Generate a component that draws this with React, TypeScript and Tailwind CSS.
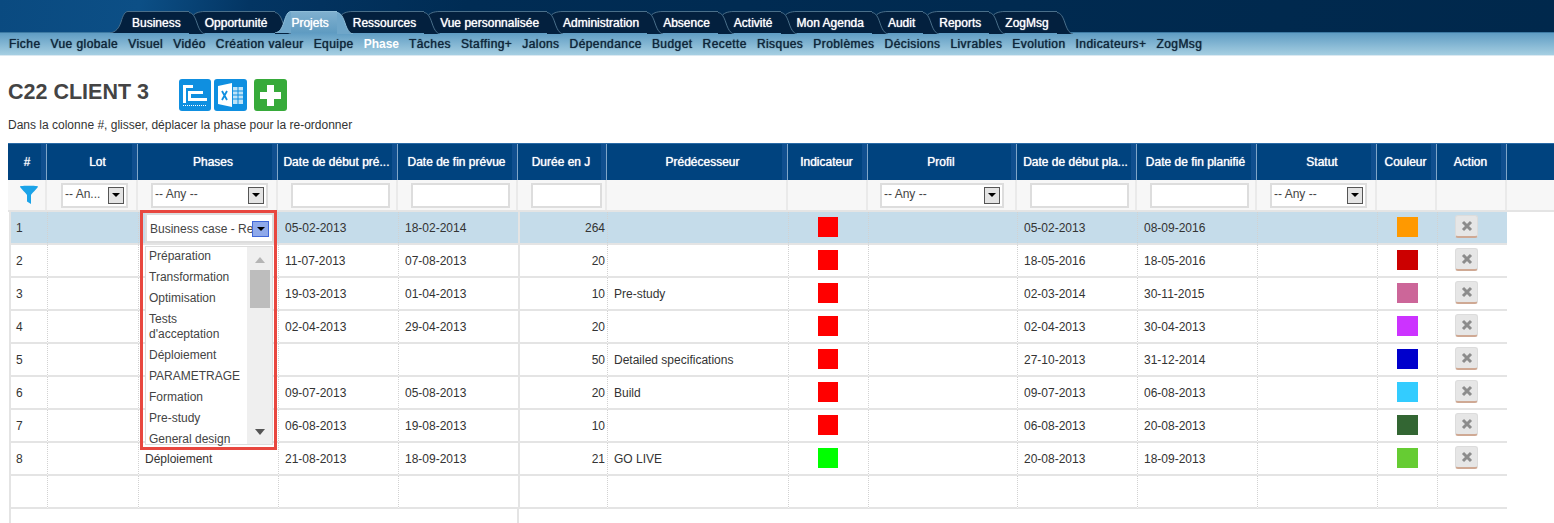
import React from 'react';

const mainTabs = ['Business', 'Opportunité', 'Projets', 'Ressources', 'Vue personnalisée', 'Administration', 'Absence', 'Activité', 'Mon Agenda', 'Audit', 'Reports', 'ZogMsg'];
const subTabs = ['Fiche', 'Vue globale', 'Visuel', 'Vidéo', 'Création valeur', 'Equipe', 'Phase', 'Tâches', 'Staffing+', 'Jalons', 'Dépendance', 'Budget', 'Recette', 'Risques', 'Problèmes', 'Décisions', 'Livrables', 'Evolution', 'Indicateurs+', 'ZogMsg'];
const headers = ['#', 'Lot', 'Phases', 'Date de début pré...', 'Date de fin prévue', 'Durée en J', 'Prédécesseur', 'Indicateur', 'Profil', 'Date de début pla...', 'Date de fin planifié', 'Statut', 'Couleur', 'Action'];

const headCols = 'grid grid-cols-[39px_91px_140px_120px_120px_89px_181px_80px_149px_120px_120px_120px_60px_70px]';
const rowCols = 'grid grid-cols-[38px_91px_140px_120px_120px_89px_181px_80px_149px_120px_120px_120px_60px_70px]';

const rows = [
    { n: 1, phase: '', start: '05-02-2013', end: '18-02-2014', days: '264', pred: '', ind: 'bg-[#ff0000]', pStart: '05-02-2013', pEnd: '08-09-2016', color: 'bg-[#ff9900]' },
    { n: 2, phase: '', start: '11-07-2013', end: '07-08-2013', days: '20', pred: '', ind: 'bg-[#ff0000]', pStart: '18-05-2016', pEnd: '18-05-2016', color: 'bg-[#cc0000]' },
    { n: 3, phase: '', start: '19-03-2013', end: '01-04-2013', days: '10', pred: 'Pre-study', ind: 'bg-[#ff0000]', pStart: '02-03-2014', pEnd: '30-11-2015', color: 'bg-[#cc6699]' },
    { n: 4, phase: '', start: '02-04-2013', end: '29-04-2013', days: '20', pred: '', ind: 'bg-[#ff0000]', pStart: '02-04-2013', pEnd: '30-04-2013', color: 'bg-[#cc33ff]' },
    { n: 5, phase: '', start: '', end: '', days: '50', pred: 'Detailed specifications', ind: 'bg-[#ff0000]', pStart: '27-10-2013', pEnd: '31-12-2014', color: 'bg-[#0000cc]' },
    { n: 6, phase: '', start: '09-07-2013', end: '05-08-2013', days: '20', pred: 'Build', ind: 'bg-[#ff0000]', pStart: '09-07-2013', pEnd: '06-08-2013', color: 'bg-[#33ccff]' },
    { n: 7, phase: '', start: '06-08-2013', end: '19-08-2013', days: '10', pred: '', ind: 'bg-[#ff0000]', pStart: '06-08-2013', pEnd: '20-08-2013', color: 'bg-[#336633]' },
    { n: 8, phase: 'Déploiement', start: '21-08-2013', end: '18-09-2013', days: '21', pred: 'GO LIVE', ind: 'bg-[#00ff00]', pStart: '20-08-2013', pEnd: '18-09-2013', color: 'bg-[#66cc33]' },
];

const listItems = ['Préparation', 'Transformation', 'Optimisation', "Tests d'acceptation", 'Déploiement', 'PARAMETRAGE', 'Formation', 'Pre-study', 'General design'];

const cell = 'h-[33px] border-b-2 border-b-[#e4e4e4] [border-bottom-style:solid] border-l border-l-[#d2d2d2] [border-left-style:dotted] flex items-center px-[6px]';
const solidCell = 'h-[33px] border-b-2 border-b-[#e4e4e4] border-l-2 border-l-[#e4e4e4] flex items-center px-[5px]';

const TabLeft: React.FC<{ kind: 'first' | 'active' | 'normal' }> = ({ kind }) => {
    const fill = kind === 'active' ? '#6fa6c9' : '#03203e';
    const stroke = kind === 'active' ? '#8fbdd8' : '#4a6f8a';
    if (kind === 'first') {
        return (
            <svg width="22" height="22" viewBox="0 0 22 22" className="absolute -left-[6px] top-0">
                <path d="M0 22C6 21 9 17 11 11C13 4 15 .5 18 .5L22 .5L22 22Z" fill={fill} />
                <path d="M0 22C6 21 9 17 11 11C13 4 15 .5 18 .5L22 .5" fill="none" stroke={stroke} />
            </svg>
        );
    }
    if (kind === 'active') {
        return (
            <svg width="16" height="22" viewBox="0 0 16 22" className="absolute left-0 top-0">
                <path d="M0 22C5 21 7 17 9 11C11 4 13 .5 16 .5L16 22Z" fill={fill} />
                <path d="M0 22C5 21 7 17 9 11C11 4 13 .5 16 .5" fill="none" stroke={stroke} />
            </svg>
        );
    }
    return (
        <svg width="16" height="22" viewBox="0 0 16 22" className="absolute left-0 top-0">
            <path d="M16 .5C10 .5 5 2 3 6L12 22L16 22Z" fill={fill} />
            <path d="M16 .5C10 .5 5 2 3 6L12 22" fill="none" stroke={stroke} />
        </svg>
    );
};

const TabRight: React.FC<{ active: boolean }> = ({ active }) => (
    <svg width="16" height="22" viewBox="0 0 16 22" className="absolute left-full top-0">
        <path d="M0 .5C4 1 6 5 8 11C10 17 12 21 16 22L0 22Z" fill={active ? '#6fa6c9' : '#03203e'} />
        <path d="M0 .5C4 1 6 5 8 11C10 17 12 21 16 22" fill="none" stroke={active ? '#8fbdd8' : '#4a6f8a'} />
    </svg>
);

const SelectArrow: React.FC<{ blue?: boolean }> = ({ blue }) => (
    <span className={`absolute flex items-center justify-center border ${blue ? 'right-[3px] top-[6px] w-[17px] h-[16px] bg-[#8fa9ea] border-[#3f66d8]' : 'right-[2px] top-[2px] w-[16px] h-[17px] bg-[#e4e4e4] border-[#555]'}`}>
        <span className="w-0 h-0 border-l-[4px] border-r-[4px] border-t-[4px] border-l-transparent border-r-transparent border-t-black" />
    </span>
);

const FilterSelect: React.FC<{ label: string; box: string }> = ({ label, box }) => (
    <div className={`relative h-[25px] bg-white border-2 border-[#dddddd] pl-[2px] text-[12px] leading-[19px] text-[#444] ${box}`}>
        {label}
        <SelectArrow />
    </div>
);

const FilterInput: React.FC<{ width: string }> = ({ width }) => <div className={`h-[25px] ml-[13px] bg-white border-2 border-[#dddddd] ${width}`} />;

const App: React.FC = () => {
    return (
        <div className="w-[1554px] h-[523px] overflow-hidden bg-white font-['Liberation_Sans',Arial,sans-serif] text-[12px] text-[#333]">

            {/* Top tabs: reversed so that each tab's right edge sits over the next one */}
            <div className="h-[33px] pt-[11px] pl-[116px] flex flex-row-reverse justify-end bg-[linear-gradient(100deg,#0a4a80_0%,#0c4f86_9%,#033563_16%,#002c54_30%,#00284c_100%)] border-b border-b-[#3d7aa3]">
                {[...mainTabs].reverse().map((tab) => {
                    const active = tab === 'Projets';
                    const kind = active ? 'active' : tab === 'Business' ? 'first' : 'normal';
                    return (
                        <div key={tab} className={`relative h-[22px] pl-[16px] flex ${active ? 'z-10' : ''}`}>
                            <TabLeft kind={kind} />
                            <div className={`relative h-[22px] pr-[8px] leading-[23px] text-white [text-shadow:0_0_1px_#fff] border-t ${active ? 'bg-[linear-gradient(#7fb0cf,#5f9bc1)] border-t-[#8fbdd8]' : 'bg-[#03203e] border-t-[#4a6f8a]'}`}>
                                {tab}
                                <TabRight active={active} />
                            </div>
                        </div>
                    );
                })}
            </div>

            {/* Sub menu */}
            <div className="h-[23px] flex items-center gap-[10px] pl-[9px] bg-[linear-gradient(#5f9cc3,#a6cfe2)] border-b border-b-[#dbe9f1] text-[12px] tracking-[0.43px] text-[#10263a] [text-shadow:0_0_1px_#10263a]">
                {subTabs.map((tab) => (
                    <span key={tab} className={tab === 'Phase' ? 'font-bold tracking-normal text-white [text-shadow:none]' : ''}>{tab}</span>
                ))}
            </div>

            {/* Title and tools */}
            <div className="h-[55px] pl-[8px] flex items-end">
                <h1 className="w-[171px] pb-[1px] text-[21.5px] leading-[36px] font-bold text-[#444]">C22 CLIENT 3</h1>
                <div className="flex">
                    <svg width="32" height="32" viewBox="0 0 32 32" className="mr-[3px]">
                        <rect width="32" height="32" rx="3" fill="#0f8fe0" />
                        <path d="M4 6h10v3H7v15H4zM9 12h15v3H12v4h16v3H9z" fill="#fff" />
                        <path d="M4 26.5h24" stroke="#fff" strokeWidth="1" strokeDasharray="1 1" />
                    </svg>
                    <svg width="33" height="32" viewBox="0 0 33 32" className="mr-[7px]">
                        <rect width="33" height="32" rx="3" fill="#0f8fe0" />
                        <path d="M4 7l14-3v24l-14-3z" fill="#fff" />
                        <path d="M8 12l5 9M13 12l-5 9" stroke="#0f8fe0" strokeWidth="1.8" />
                        <path d="M19 8h10v17H19z" fill="#bfe3f8" />
                        <path d="M19 12h10M19 16h10M19 20h10M24 8v17" stroke="#0f8fe0" strokeWidth="1" />
                    </svg>
                    <svg width="33" height="32" viewBox="0 0 33 32">
                        <rect width="33" height="32" rx="3" fill="#37aa3a" />
                        <path d="M13 6h7v7h7v7h-7v7h-7v-7H6v-7h7z" fill="#fff" />
                    </svg>
                </div>
            </div>

            <p className="h-[32px] pl-[8px] pt-[7px] leading-[14px] text-[#333]">Dans la colonne #, glisser, déplacer la phase pour la re-ordonner</p>

            {/* Table */}
            <div className="ml-[8px]">
                <div className="h-[37px] bg-[#00437f] border-t border-t-[#2a6aa6]">
                    <div className={headCols}>
                        {headers.map((h, i) => (
                            <div key={h} className={`h-[36px] border-r border-r-[#7fa5c8] flex items-center justify-center text-white [text-shadow:0_0_1px_#fff] bg-[linear-gradient(to_left,#104f8f_0,#104f8f_5px,transparent_5px)] ${i === 1 || i === 2 || i === 6 || i === 11 ? 'pl-[11px]' : i === 0 ? '' : 'pr-[2px]'}`}>
                                {h}
                            </div>
                        ))}
                    </div>
                </div>

                {/* Filters */}
                <div className="w-[1546px] h-[32px] bg-[#f7f7f7] border-b-2 border-b-[#e4e4e4]">
                    <div className={headCols}>
                        {headers.map((h, i) => (
                            <div key={h} className="h-[30px] flex items-center border-r-2 border-r-[#eaeaea]">
                                {i === 0 && (
                                    <svg width="18" height="20" viewBox="0 0 18 20" className="ml-[12px]">
                                        <path d="M0 1.5C0 .5 18 .5 18 1.5C18 3 11 9 11 10v9l-4-2.5V10C7 9 0 3 0 1.5z" fill="#1ba3e8" />
                                    </svg>
                                )}
                                {i === 1 && <FilterSelect label="-- An..." box="ml-[14px] w-[67px]" />}
                                {i === 2 && <FilterSelect label="-- Any --" box="ml-[13px] w-[117px]" />}
                                {(i === 3 || i === 4 || i === 9 || i === 10) && <FilterInput width="w-[99px]" />}
                                {i === 5 && <FilterInput width="w-[71px]" />}
                                {i === 8 && <FilterSelect label="-- Any --" box="ml-[12px] w-[124px]" />}
                                {i === 11 && <FilterSelect label="-- Any --" box="ml-[13px] w-[97px]" />}
                            </div>
                        ))}
                    </div>
                </div>

                {/* Rows */}
                <div className="w-[1498px] ml-px">
                    {rows.map((row) => (
                        <div key={row.n} className={`${rowCols} ${row.n === 1 ? 'bg-[#c5dcea]' : ''}`}>
                            <div className={solidCell}>{row.n}</div>
                            <div className={cell} />
                            <div className={`${cell} relative`}>
                                {row.phase}
                                {row.n === 1 && (
                                    <div className="absolute z-20 left-[1px] top-[-2px] w-[137px] h-[240px] border-[3px] border-[#e8473f]">
                                        <div className="relative h-[30px] ml-[2px] bg-white border-2 border-[#dddddd] pl-[3px] pt-[7px] text-[12px] leading-[14px] whitespace-nowrap overflow-hidden text-[#444]">
                                            Business case - Re
                                            <SelectArrow blue />
                                        </div>
                                        <div className="flex h-[199px] ml-[2px] mt-[3px] mr-[1px] bg-white border border-[#dddddd]">
                                            <ul className="w-[101px] pl-[3px] -mt-px text-[#444]">
                                                {listItems.map((item) => (
                                                    <li key={item} className="py-[3px] last:py-0 last:pt-[3px] leading-[15px] last:leading-[14px]">{item}</li>
                                                ))}
                                            </ul>
                                            <div className="relative flex-1 bg-[#efefef] flex justify-center">
                                                <span className="absolute top-[10px] w-0 h-0 border-l-[5px] border-r-[5px] border-b-[6px] border-l-transparent border-r-transparent border-b-[#b5b5b5]" />
                                                <span className="absolute top-[23px] w-[20px] h-[38px] bg-[#bdbdbd]" />
                                                <span className="absolute bottom-[9px] w-0 h-0 border-l-[5px] border-r-[5px] border-t-[6px] border-l-transparent border-r-transparent border-t-[#555]" />
                                            </div>
                                        </div>
                                    </div>
                                )}
                            </div>
                            <div className={cell}>{row.start}</div>
                            <div className={cell}>{row.end}</div>
                            <div className={`${solidCell} justify-end pr-[2px]`}>{row.days}</div>
                            <div className={cell}>{row.pred}</div>
                            <div className={`${cell} justify-center pr-[8px]`}><span className={`-mt-[2px] w-[20px] h-[20px] ${row.ind}`} /></div>
                            <div className={cell} />
                            <div className={cell}>{row.pStart}</div>
                            <div className={cell}>{row.pEnd}</div>
                            <div className={cell} />
                            <div className={`${cell} justify-center`}><span className={`-mt-[2px] w-[21px] h-[20px] ${row.color}`} /></div>
                            <div className={cell}>
                                <span className="-mt-[2px] ml-[11px] w-[23px] h-[23px] rounded-[3px] bg-[#e6e6e6] border border-[#dcdcdc] border-b-2 border-b-[#cfa994] flex items-center justify-center">
                                    <svg width="12" height="12" viewBox="0 0 12 12">
                                        <path d="M2 2l8 8M10 2l-8 8" stroke="#8c8c8c" strokeWidth="3" />
                                    </svg>
                                </span>
                            </div>
                        </div>
                    ))}

                    {/* Empty row */}
                    <div className={rowCols}>
                        {headers.map((h, i) => <div key={h} className={i === 0 || i === 5 ? solidCell : cell} />)}
                    </div>
                    <div className="flex h-[16px]">
                        <div className="w-[508px] h-full border-l-2 border-l-[#e4e4e4]" />
                        <div className="w-[2px] h-full bg-[#e4e4e4]" />
                    </div>
                </div>
            </div>
        </div>
    );
};

export default App;
